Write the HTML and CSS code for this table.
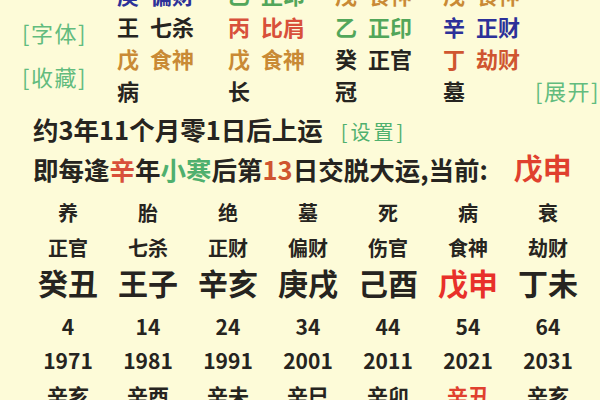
FILE: index.html
```html
<!DOCTYPE html>
<html lang="zh">
<head>
<meta charset="utf-8">
<link rel="stylesheet" href="styles.css">
</head>
<body>
<div class="page">
  <section class="top">
    <div class="labels">
      <div class="lbl">[字体]</div>
      <div class="lbl">[收藏]</div>
    </div>
    <div class="pillars">
      <div class="cell navy"><span class="g">庚</span>偏财</div>
      <div class="cell green"><span class="g">乙</span>正印</div>
      <div class="cell orange"><span class="g">戊</span>食神</div>
      <div class="cell orange"><span class="g">戊</span>食神</div>
      <div></div>

      <div class="cell"><span class="g">王</span>七杀</div>
      <div class="cell red"><span class="g">丙</span>比肩</div>
      <div class="cell green"><span class="g">乙</span>正印</div>
      <div class="cell navy"><span class="g">辛</span>正财</div>
      <div></div>

      <div class="cell orange"><span class="g">戊</span>食神</div>
      <div class="cell orange"><span class="g">戊</span>食神</div>
      <div class="cell"><span class="g">癸</span>正官</div>
      <div class="cell redorange"><span class="g">丁</span>劫财</div>
      <div></div>

      <div class="cell">病</div>
      <div class="cell">长</div>
      <div class="cell">冠</div>
      <div class="cell">墓</div>
      <div class="cell lbl">[展开]</div>
    </div>
  </section>

  <p class="line first">约3年11个月零1日后上运<span class="set">[设置]</span></p>
  <p class="line">即每逢<span class="red">辛</span>年<span class="green2">小寒</span>后第<span class="redorange">13</span>日交脱大运,当前:<span class="cur">戊申</span></p>

  <section class="luck">
    <div class="r1">养</div><div class="r1">胎</div><div class="r1">绝</div><div class="r1">墓</div><div class="r1">死</div><div class="r1">病</div><div class="r1">衰</div>
    <div class="r2">正官</div><div class="r2">七杀</div><div class="r2">正财</div><div class="r2">偏财</div><div class="r2">伤官</div><div class="r2">食神</div><div class="r2">劫财</div>
    <div class="r3">癸丑</div><div class="r3">王子</div><div class="r3">辛亥</div><div class="r3">庚戌</div><div class="r3">己酉</div><div class="r3 hot">戊申</div><div class="r3">丁未</div>
    <div class="r4">4</div><div class="r4">14</div><div class="r4">24</div><div class="r4">34</div><div class="r4">44</div><div class="r4">54</div><div class="r4">64</div>
    <div class="r5">1971</div><div class="r5">1981</div><div class="r5">1991</div><div class="r5">2001</div><div class="r5">2011</div><div class="r5">2021</div><div class="r5">2031</div>
    <div class="r6">辛亥</div><div class="r6">辛酉</div><div class="r6">辛未</div><div class="r6">辛巳</div><div class="r6">辛卯</div><div class="r6 hot2">辛丑</div><div class="r6">辛亥</div>
  </section>
</div>
</body>
</html>
```

FILE: styles.css
```css
html, body {
  margin: 0;
  padding: 0;
  background: #fdfbd8;
}
body {
  width: 600px;
  height: 400px;
  overflow: hidden;
  font-family: "Noto Sans CJK SC", "Noto Sans", sans-serif;
  color: #262420;
}
.page {
  display: flex;
  flex-direction: column;
}
.top {
  display: flex;
  margin-top: -22px;
}
.labels {
  width: 117px;
  display: flex;
  flex-direction: column;
  gap: 14px;
  padding-top: 39px;
  box-sizing: border-box;
  padding-left: 22px;
}
.lbl {
  font-size: 22px;
  line-height: 30px;
  color: #62bc7e;
  letter-spacing: 1.5px;
}
.pillars {
  display: grid;
  grid-template-columns: 111px 107px 108px 92px 1fr;
  grid-auto-rows: 32px;
}
.cell {
  font-size: 22px;
  line-height: 32px;
  font-weight: 700;
  white-space: nowrap;
}
.cell.lbl {
  font-weight: 400;
  font-size: 22px;
}
.g {
  margin-right: 11px;
}
.navy { color: #2c3199; }
.green { color: #52a65a; }
.orange { color: #c98a35; }
.red { color: #d8503a; }
.redorange { color: #cf5530; }
.green2 { color: #4fb06e; }

.line {
  margin: 0;
  padding-left: 33px;
  font-size: 25.5px;
  line-height: 40px;
  height: 40px;
  font-weight: 700;
  white-space: nowrap;
}
.line.first {
  margin-top: 3px;
}
.set {
  font-size: 20px;
  font-weight: 400;
  color: #4fb06e;
  margin-left: 18px;
  letter-spacing: 3px;
}
.cur {
  color: #e0402e;
  font-size: 29px;
  line-height: 30px;
  margin-left: 26px;
}

.luck {
  display: grid;
  grid-template-columns: repeat(7, 80px);
  grid-template-rows: 36px 35px 34px 44px 34px 36px;
  padding-left: 28px;
  margin-top: 5px;
  text-align: center;
  font-weight: 700;
}
.luck > div {
  display: flex;
  align-items: center;
  justify-content: center;
  white-space: nowrap;
}
.r1, .r2 { font-size: 20px; }
.r3 { font-size: 30px; }
.r4 { padding-top: 10px; }
.r4, .r5, .r6 { font-size: 21px; }
.hot { color: #e8302a; }
.hot2 { color: #e0402e; }
```
